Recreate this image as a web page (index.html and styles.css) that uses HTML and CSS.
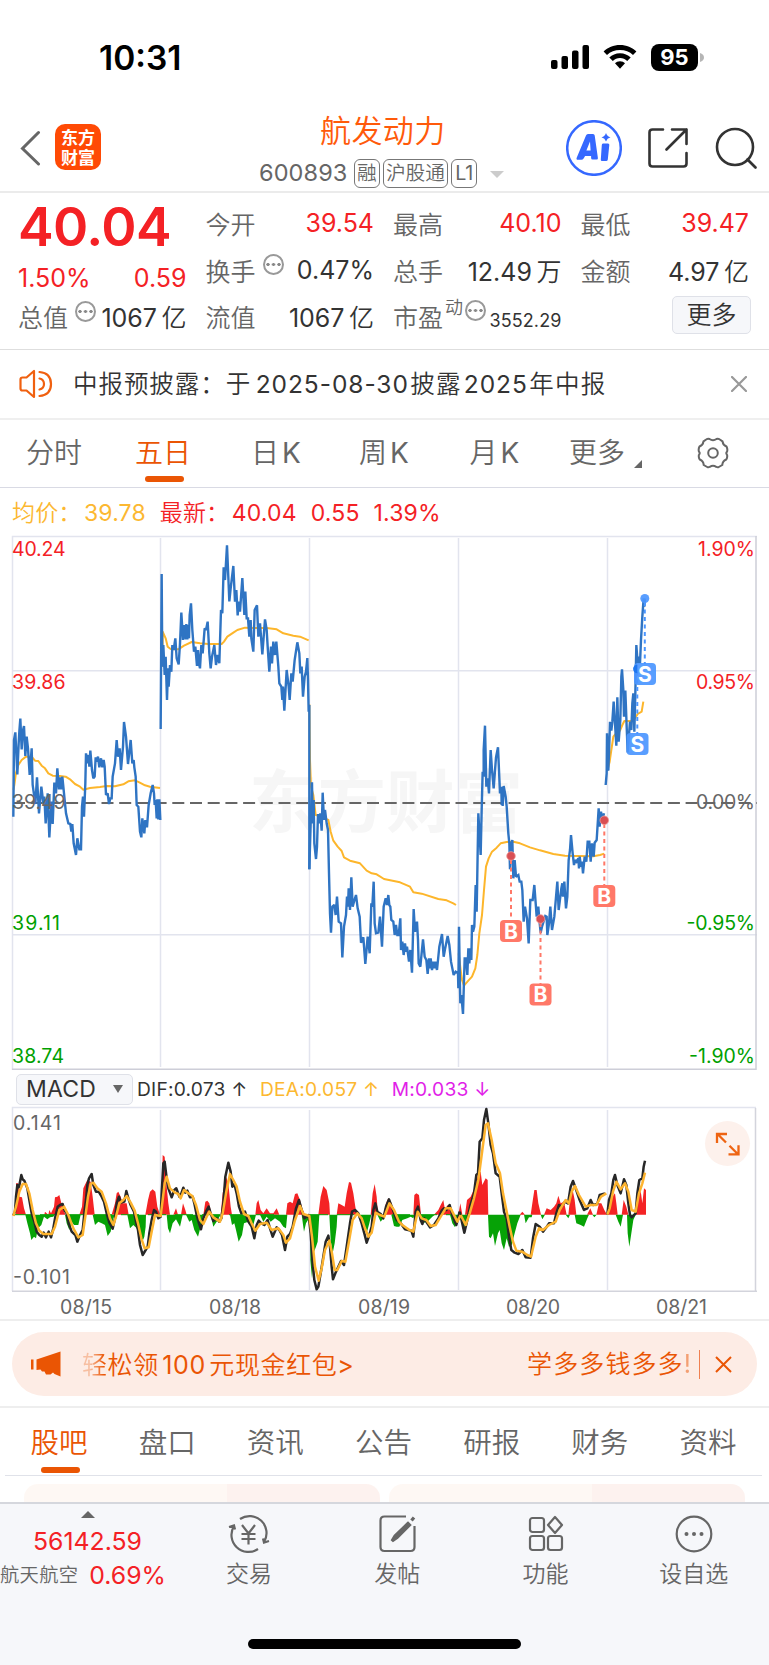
FILE: index.html
```html
<!DOCTYPE html>
<html lang="zh-CN">
<head>
<meta charset="utf-8">
<title>航发动力 600893</title>
<link rel="stylesheet" href="styles.css">
</head>
<body>
<div class="app">
  <header class="status">
    <span class="clock">10:31</span>
    <span class="status-icons">
      <svg width="39" height="26" viewBox="0 0 39 26"><rect x="0" y="16" width="6.500" height="9" rx="2"/><rect x="10.500" y="12" width="6.500" height="13" rx="2"/><rect x="21" y="6.500" width="6.500" height="18.500" rx="2"/><rect x="31.500" y="1" width="6.500" height="24" rx="2"/></svg>
      <svg class="wifi" width="34" height="26" viewBox="0 0 34 26"><path d="M17 1C10.500 1 4.800 3.500 .6 7.500L4 11C7.300 7.800 12 6 17 6s9.700 1.800 13 5l3.400-3.500C29.200 3.500 23.500 1 17 1z"/><path d="M17 9.300c-4.200 0-8 1.600-10.700 4.200l3.500 3.400c1.900-1.700 4.400-2.800 7.200-2.800s5.300 1.100 7.200 2.800l3.500-3.400C25 10.900 21.200 9.300 17 9.300z"/><path d="M17 17.300c-2 0-3.800.8-5 2l5 5.400 5-5.400c-1.200-1.200-3-2-5-2z"/></svg>
      <span class="battery">95</span>
      <svg class="nub" width="5" height="26" viewBox="0 0 5 26"><path d="M1 9c2.500 1 4 2 4 4.500S3.500 17 1 18z"/></svg>
    </span>
  </header>

  <nav class="titlebar">
    <svg class="back" width="22" height="36" viewBox="0 0 22 36"><path d="M19.500 2.500 3.500 18.500l16 15.500"/></svg>
    <div class="logo">东方<br>财富</div>
    <div class="heading">
      <h1>航发动力</h1>
      <div class="sub"><span class="code">600893</span><span class="tag">融</span><span class="tag">沪股通</span><span class="tag">L1</span><i class="caret"></i></div>
    </div>
    <div class="tools">
      <svg width="56" height="56" viewBox="0 0 56 56"><circle cx="28" cy="28" r="26.800" fill="#fff" stroke="#3568ff" stroke-width="2.500"/><g fill="#3568ff" fill-rule="evenodd"><path d="M20 15.500q.5-1.500 2-1.500h5q1.500 0 1.700 1.500l3.200 22.500q.2 1.500-1.300 1.500h-4q-1.500 0-1.500-1.500v-2h-6l-1.500 2.500q-.8 1.200-2.200 1.200h-3.500q-2 0-1.200-2zM24 21.500l-3.600 9h4.200z"/><path d="M37 23.500h5q1.500 0 1.300 1.500l-1.500 14.500q-.2 1.500-1.700 1.500h-4q-1.500 0-1.300-1.500l1-14.500q0-1.500 1.200-1.500zM40 13q1 3.500 4.500 4.300-3.500.9-4.500 4.200-1-3.300-4.500-4.200 3.500-.8 4.500-4.300z"/></g></svg>
      <svg class="line share" width="40" height="40" viewBox="0 0 40 40"><path d="M15 1.500H4.500Q1.500 1.500 1.500 4.500v31q0 3 3 3h31q3 0 3-3V25M24 1.500h14.500V16M38.500 1.500 18.500 21.500"/></svg>
      <svg class="line" width="42" height="42" viewBox="0 0 42 42"><circle cx="20" cy="20" r="18"/><path d="m32.500 32.500 8 8"/></svg>
    </div>
  </nav>

  <section class="quote">
    <div class="col c1">
      <div class="price">40.04</div>
      <div class="cell red"><span>1.50%</span><b>0.59</b></div>
      <div class="cell"><span>总值</span><i class="dots"></i><b>1067<em>亿</em></b></div>
    </div>
    <div class="col">
      <div class="cell"><span>今开</span><b class="red">39.54</b></div>
      <div class="cell"><span>换手</span><i class="dots"></i><b>0.47%</b></div>
      <div class="cell"><span>流值</span><b>1067<em>亿</em></b></div>
    </div>
    <div class="col">
      <div class="cell"><span>最高</span><b class="red">40.10</b></div>
      <div class="cell"><span>总手</span><b>12.49<em>万</em></b></div>
      <div class="cell pe"><span>市盈</span><sup>动</sup><i class="dots"></i><b>3552.29</b></div>
    </div>
    <div class="col">
      <div class="cell"><span>最低</span><b class="red">39.47</b></div>
      <div class="cell"><span>金额</span><b>4.97<em>亿</em></b></div>
      <div class="cell more"><button>更多</button></div>
    </div>
  </section>

  <section class="notice">
    <svg width="34" height="30" viewBox="0 0 34 30"><path d="M1.500 10.500q0-2 2-2h4L15 2v26l-7.500-6.500h-4q-2 0-2-2zM20.500 9.500q4.500 1 4.500 5.500t-4.500 5.500M20.500 3q11.500 1 11.500 12T20.500 27"/></svg>
    <p>中报预披露：<span class="gap">于</span>2025-08-30<em>披露</em>2025<em>年中报</em></p>
    <svg class="close" width="16" height="16" viewBox="0 0 16 16"><path d="m1 1 14 14M15 1 1 15"/></svg>
  </section>

  <nav class="periods">
    <span>分时</span><span class="on">五日</span><span>日<em>K</em></span><span>周<em>K</em></span><span>月<em>K</em></span><span class="drop">更多</span>
    <svg width="32" height="32" viewBox="0 0 32 32"><path d="M12.500 2q3.500 2.500 7 0 1.500-.8 3 .3l3 2q.5 3.800 4 5.200 1.300 2.500.6 5-1.600 1.500 0 3.500.5 2.500-.8 4.500-3.800 1.500-4 5.500l-3.500 2q-1.200.8-2.600-.2-3.200-2-6.400 0-1.400 1-2.600.2l-3.500-2q-.2-4-4-5.500Q1.400 20.500 1.900 18q1.600-2 0-3.500-.7-2.500.6-5 3.500-1.400 4-5.200l3-2q1.500-1.100 3-.3z"/><circle cx="16" cy="16" r="4.800"/></svg>
  </nav>

  <div class="legend"><span class="avg">均价：<b>39.78</b></span><span class="red">最新：<b>40.04</b><b>0.55</b><b>1.39%</b></span></div>

  <svg class="chart" width="769" height="544" viewBox="0 528 769 544">
    <g fill="none" stroke="#e2e4ee" stroke-width="1.500"><path d="M12.500 1070V536.500H757"/><path d="M160.500 538v529M309.500 538v529M458.500 538v529M607.500 538v529M13 670.700H757M13 934.700H757"/><path stroke="#cdced8" d="M756 536V1069.300H12"/></g>
    <text class="water" x="249" y="827" textLength="274" lengthAdjust="spacingAndGlyphs">东方财富</text>
    <path d="M13 803H757" stroke="#666" stroke-width="2" stroke-dasharray="12 5.700" fill="none"/>
    <g class="avgline">
      <g transform="translate(0 530) scale(.333333)">
        <path d="M40 780 43 765 48 728 55 705 65 690 78 680 95 680 105 692 115 693 125 707 135 715 145 730 158 737 180 738 197 740 210 748 225 762 240 770 250 779 270 774 300 771 320 768 345 769 370 763 385 754 405 751 418 757 435 766 450 770 480 774"/>
        <path d="M487 410 488 305 497 325 503 350 512 357 535 358 552 347 575 336 600 340 625 342 665 342 672 335 682 320 700 308 712 300 735 293 765 294 800 294 830 298 850 310 880 317 900 320 926 331"/>
      </g>
      <g transform="translate(300 660) scale(.333333)">
        <path d="M28 133 30 300 33 380 40 405 47 465 60 468 75 475 85 480 92 515 100 542 113 560 125 573 132 592 150 602 180 610 200 632 215 640 230 643 252 657 300 667 330 680 340 697 365 701 415 717 440 721 460 730 468 735"/>
        <path d="M476 880 482 930 486 960 492 977 505 962 516 950 526 925 532 885 538 820 546 765 552 690 558 620 566 595 576 575 590 563 602 550 620 546 640 545 660 550 690 562 720 571 760 582 795 587 830 588 880 589 900 585 913 581"/>
      </g>
      <path transform="translate(450 560) scale(.333333)" d="M472 632 479 605 484 570 490 530 500 518 510 512 517 495 523 483 545 483 555 475 563 462 575 455 580 425"/>
    </g>
    <g class="priceline">
      <g transform="translate(0 530) scale(.333333)">
        <path d="M40 860 42 630 46 607 52 733 56 640 58 605 61 566 65 658 68 605 72 588 76 678 80 620 84 655 89 735 95 655 98 765 106 822 111 742 117 850 124 770 130 820 133 800 137 880 143 790 148 922 154 815 158 882 163 758 168 790 172 715 177 778 181 742 184 778 187 740 190 770 195 820 198 850 205 880 211 882 214 905 217 882 221 940 228 975 232 925 238 958 243 958 246 830 249 800 252 860 256 760 258 670 262 700 266 675 268 710 271 662 276 720 280 745 284 740 287 682 290 695 294 680 298 712 303 685 307 712 311 690 314 710 318 795 323 790 327 822 331 805 335 805 338 740 345 700 350 630 354 680 359 655 363 720 369 650 372 576 378 620 384 702 392 630 397 700 401 690 403 712 407 740 410 825 415 830 420 905 424 922 427 865 433 910 436 870 441 892 446 825 452 790 458 765 462 790 464 825 467 810 470 865 472 808 475 868 478 808 481 870"/>
        <path d="M482 597 485 132 487 410 490 345 494 435 497 380 501 510 504 415 506 470 510 405 514 425 517 345 521 360 526 325 530 385 536 403 540 340 544 248 549 330 553 285 557 328 559 282 562 328 565 285 567 325 569 255 573 220 577 300 582 365 586 350 591 408 594 360 597 400 600 415 604 345 608 370 614 295 618 300 623 275 628 370 632 415 636 380 643 345 648 405 653 375 658 400 663 240 667 250 671 112 675 150 681 46 688 214 692 175 700 108 705 215 709 180 713 256 716 215 720 245 727 144 733 255 736 185 740 265 744 265 748 320 752 270 754 325 760 365 764 240 771 226 775 320 780 280 787 373 795 268 800 300 803 350 808 425 813 350 816 400 820 335 825 375 829 335 835 410 838 460 844 470 847 510 849 470 853 542 860 420 866 470 869 510 874 430 878 455 884 390 892 337 898 370 901 430 905 410 909 500 914 440 918 425 922 384 924 450 926 545 928 525 928 1018"/>
      </g>
      <g transform="translate(300 660) scale(.333333)">
        <path d="M28 628 32 490 36 367 38 490 41 420 43 550 48 597 51 560 54 462 57 490 61 460 65 512 68 398 72 480 75 450 80 490 84 510 87 640 90 760 93 818 97 740 103 735 107 765 111 710 116 785 123 790 127 892 132 800 138 765 141 710 144 740 146 685 150 750 154 652 158 740 162 725 168 705 173 745 179 770 183 848 190 832 196 912 203 830 209 880 214 730 217 740 221 665 224 790 228 820 235 818 240 770 246 860 251 740 257 715 261 735 265 705 268 735 271 740 274 780 280 785 284 825 288 795 292 825 296 825 301 775 303 870 307 845 311 885 315 850 318 875 321 860 327 905 331 870 336 938 341 747 345 815 351 785 354 840 356 910 361 920 369 838 374 890 379 900 383 942 387 895 389 925 392 895 396 930 400 905 403 925 406 905 411 930 418 860 426 822 431 890 435 868 443 828 448 855 453 905 461 945 467 935 474 940 475 985 477 800 480 985 481 1030 484 1005 489 1062 492 960 494 895 498 895 502 945 505 865 508 910 511 865 514 900 516 795 519 815 523 800 527 675 530 755 535 460 539 530 542 585 545 450 548 335 551 350 551 270 555 197 559 380 563 355 567 400 572 270 576 330 581 385 588 292 594 262 600 400 604 380 605 435 607 405 608 438 611 378 617 410 620 440 625 520 628 550 630 628 634 550 637 540 640 655 644 600 648 650 655 645 659 665 664 665 667 690 671 785 675 740 681 775 686 850 691 720 698 720 703 675 710 770 715 740 718 780 722 818 726 800 736 768 740 770 742 825 747 790 751 740 756 810 763 770 772 665 776 750 784 685 787 670 789 710 793 665 798 745 802 710 806 600 810 570 813 525 818 580 822 615 826 600 830 605 835 595 837 625 839 590 843 620 846 605 849 640 854 590 859 605 863 545 868 545 872 605 876 550 881 590 884 548 890 540 896 445 899 500 903 455 907 480 912 460"/>
      </g>
      <path transform="translate(450 560) scale(.333333)" d="M467 675 470 640 471 520 475 632 478 550 480 485 484 512 487 485 491 425 495 490 499 557 502 412 506 545 511 480 514 350 516 328 520 390 522 470 526 392 530 500 533 577 540 485 544 510 547 430 550 400 553 515 556 400 559 255 563 310 567 290 570 310 573 240 577 170 581 115 583 140 585 115"/>
    </g>
    <g class="marks">
      <path class="buy" d="M511 860v60M540.500 923v61M604.300 824v61"/>
      <path class="sell" d="M644.800 602v62M637.300 672v62"/>
      <g fill="#d94f54" stroke="#f29a96" stroke-width=".8"><circle cx="511" cy="856" r="4.300"/><circle cx="540.500" cy="919" r="4.300"/><circle cx="604.300" cy="820.300" r="4.300"/></g>
      <g fill="#ff7868"><rect x="500" y="920" width="22" height="22" rx="4"/><rect x="529.500" y="983.500" width="22" height="22" rx="4"/><rect x="593.300" y="885" width="22" height="22" rx="4"/></g>
      <g fill="#4b96ff" fill-opacity=".92"><circle cx="644.800" cy="598.500" r="4.500"/><rect x="634" y="663" width="22" height="22" rx="4"/><rect x="626.500" y="733" width="22" height="22" rx="4"/></g>
      <path d="M637.300 664.800a4.200 4.200 0 0 0 0 8.400z" fill="#1f78ef"/>
      <g class="letter"><text x="511" y="938.500">B</text><text x="540.500" y="1002">B</text><text x="604.300" y="903.500">B</text><text x="645" y="681.500">S</text><text x="637.500" y="751.500">S</text></g>
    </g>
    <g class="axis">
      <text class="up" x="12" y="556" textLength="53.500">40.24</text><text class="up" x="12" y="689" textLength="53.500">39.86</text><text x="12" y="809" textLength="53.500">39.49</text><text class="down" x="12" y="929.500" textLength="48">39.11</text><text class="down" x="12" y="1062.500" textLength="52">38.74</text>
      <g text-anchor="end"><text class="up" x="755" y="556" textLength="57">1.90%</text><text class="up" x="755" y="689" textLength="59">0.95%</text><text x="755" y="809" textLength="59">0.00%</text><text class="down" x="755" y="929.500" textLength="68.500">-0.95%</text><text class="down" x="755" y="1062.500" textLength="66">-1.90%</text></g>
    </g>
  </svg>

  <div class="macd-head">
    <button>MACD<i></i></button><span class="dif">DIF:0.073 ↑</span><span class="dea">DEA:0.057 ↑</span><span class="m">M:0.033 ↓</span>
  </div>

  <svg class="macd" width="769" height="214" viewBox="0 1106 769 214">
    <g fill="none" stroke="#e2e4ee" stroke-width="1.500"><path d="M12.500 1291V1107.500H756"/><path d="M160.500 1110v180M309.500 1110v180M458.500 1110v180M607.500 1110v180"/><path stroke="#d3d4dc" d="M755.500 1108V1291.300M757 1291.300H12"/></g>
    <g transform="translate(0 1060) scale(.333333)">
      <path fill="#f42325" d="M48 464V370L55 370 58 410 66 412 72 445 78 464zM133 464 135 455 145 464 148 450 153 460 162 440 165 412 172 410 178 405 183 425 190 450 197 464zM238 464 246 440 250 385 256 372 262 360 272 365 278 410 284 464zM335 464 345 430 350 400 355 395 362 410 368 430 380 430 386 464zM436 464 444 420 450 395 458 388 466 395 472 440 480 464zM484 464 488 285 494 290 500 380 505 430 510 464zM520 464 528 445 534 464zM543 464 549 430 556 450 560 464zM610 464 616 425 622 422 628 430 634 464zM662 464 668 400 678 350 685 370 692 440 696 464zM766 464 770 430 775 420 782 450 790 460 800 445 810 460 820 460 830 445 838 464zM858 464 862 430 870 425 878 430 885 402 892 400 900 420 908 450 916 464zM955 464 962 410 970 378 980 390 988 430 990 464zM1010 464 1015 430 1025 435 1034 440 1040 400 1047 366 1053 368 1060 400 1066 440 1070 464zM1112 464 1118 400 1124 372 1130 410 1134 464zM1150 464 1158 430 1165 415 1173 425 1182 464z"/>
      <path fill="#06a206" d="M76 464 82 490 90 520 94 540 102 530 108 535 114 505 124 495 132 470 142 478 150 472 160 470 164 464zM195 464 200 490 208 510 215 485 222 495 235 495 242 464zM278 464 285 495 295 485 305 490 315 495 323 528 332 515 340 475 346 464zM382 464 390 505 400 495 410 505 420 530 427 545 433 530 437 500 438 464zM500 464 504 505 510 520 518 490 528 478 540 500 548 464zM558 464 568 485 575 480 583 510 594 530 602 500 610 464zM632 464 640 500 650 485 662 464zM690 464 696 495 703 490 708 510 716 545 726 525 732 490 745 485 760 495 768 464zM780 464 790 485 800 470 812 485 825 475 840 485 850 500 858 505 862 464zM905 464 912 515 918 490 930 470 931 600 936 655 942 575 948 560 953 545 958 464zM988 464 992 540 998 580 1004 550 1010 500 1012 464zM1074 464 1082 485 1092 500 1100 520 1108 490 1114 464zM1132 464 1142 485 1150 475 1155 464zM1174 464 1182 498 1190 500 1198 500 1207 480 1222 475 1232 470 1240 475 1244 464z"/>
    </g>
    <g transform="translate(369 1060) scale(.333333)">
      <path fill="#f42325" d="M133 464 136 405 142 400 150 405 156 464zM195 464 208 450 215 435 223 420 228 450 235 435 245 455 250 464zM268 464 274 430 280 464zM288 464 294 420 305 410 318 380 328 340 335 335 340 375 350 355 356 360 358 464zM452 464 460 455 468 464zM485 464 490 430 496 390 503 390 508 430 516 464zM525 464 533 445 545 450 555 440 562 430 568 407 575 430 585 425 593 464zM598 464 604 410 611 390 617 420 622 464zM654 464 664 445 672 464zM682 464 690 430 697 430 706 450 714 464zM716 464 720 410 730 410 738 400 742 430 746 464zM758 464 764 420 772 440 778 464zM798 464 803 410 810 380 816 400 820 430 825 385 831 390 831 464z"/>
      <path fill="#06a206" d="M150 464 160 490 175 485 190 470 198 464zM243 464 250 490 258 502 265 485 275 475 282 500 290 500 296 464zM357 464 360 530 365 535 372 520 378 558 387 520 392 510 398 550 405 570 413 535 420 560 428 555 437 520 445 490 455 464zM465 464 470 490 480 472 488 472 490 464zM515 464 520 478 528 464zM590 464 598 475 603 464zM617 464 622 490 635 495 645 500 655 475 660 464zM670 464 676 472 683 464zM740 464 748 485 755 500 762 464zM774 464 776 520 781 560 787 520 793 480 800 464z"/>
    </g>
    <path d="M13 1214.700H277M310 1214.700h44M392 1214.700h60" stroke="#06a206" stroke-width="1" stroke-dasharray="18 9"/>
    <g class="difline">
      <path transform="translate(0 1060) scale(.333333)" d="M40 466 45 455 48 410 52 375 57 382 64 345 68 358 73 362 82 385 88 420 95 460 103 485 110 515 118 525 125 530 131 518 138 532 146 515 153 532 160 505 166 470 173 440 180 435 188 432 193 450 200 460 206 490 215 515 226 525 232 545 240 525 248 510 254 450 258 420 262 375 267 355 275 342 280 375 288 395 296 395 305 410 312 425 320 460 328 488 338 506 345 475 350 430 357 410 363 428 373 425 379 393 385 415 392 435 402 455 408 485 414 510 420 555 428 585 437 570 443 560 448 520 455 480 462 450 468 455 475 475 482 470 485 400 490 310 494 305 500 355 505 385 515 412 523 390 529 385 538 410 544 400 550 383 556 398 562 392 570 412 578 410 583 430 590 465 597 490 603 508 610 475 618 455 626 440 632 460 640 483 650 475 658 485 664 475 670 430 676 350 685 308 692 335 697 380 703 372 710 400 717 440 724 460 735 455 745 485 755 500 763 535 770 495 776 482 784 490 793 495 803 480 810 505 818 530 830 502 838 510 846 525 855 570 862 530 870 522 878 500 888 445 897 420 905 450 913 475 920 470 926 465 932 520 938 610 943 660 950 688 955 680 962 640 970 590 977 545 985 527 990 560 995 620 999 658 1006 640 1015 620 1023 603 1032 615 1040 560 1050 490 1056 455 1065 450 1075 460 1085 490 1093 520 1100 548 1108 525 1115 500 1120 450 1126 430 1132 455 1142 462 1150 475 1158 440 1167 418 1179 450 1190 480 1202 490 1215 508 1225 510 1234 512 1240 530 1247 455 1254 440 1262 480 1267 492 1273 475 1282 490 1290 502 1302 495 1315 475 1325 452 1332 445 1339 450 1349 435 1357 465 1369 495 1379 455"/>
      <path transform="translate(369 1060) scale(.333333)" d="M272 455 286 518 295 480 303 440 315 400 322 345 327 340 332 245 340 235 345 180 352 147 358 190 365 255 372 280 380 340 392 350 398 400 405 455 413 475 420 530 427 570 437 578 448 582 460 570 470 592 485 593 492 535 500 492 512 500 522 515 530 505 540 490 555 490 562 460 570 435 578 440 588 425 597 430 605 380 612 363 620 385 632 420 645 450 655 445 665 420 672 435 685 432 692 405 708 400M715 464 720 420 727 400 733 360 738 345 745 375 755 400 765 358 772 375 778 430 783 465 788 472 800 460 805 400 811 360 820 355 824 320 828 302"/>
    </g>
    <g class="deal">
      <path transform="translate(0 1060) scale(.333333)" d="M40 468 48 440 58 395 68 372 78 372 88 400 98 450 108 490 118 512 130 522 155 522 165 500 178 450 192 440 205 465 220 505 235 532 248 525 256 470 264 410 272 372 280 368 292 385 305 395 318 430 330 475 340 495 348 470 358 430 370 420 380 408 392 428 404 452 414 490 424 535 434 565 446 562 456 510 465 465 482 468 488 420 494 370 500 350 510 385 525 398 535 402 542 415 552 390 565 400 577 408 588 435 600 480 610 492 620 470 628 455 640 472 660 485 668 460 678 400 690 342 700 360 710 380 720 425 732 462 745 468 755 490 766 512 780 492 800 488 815 510 835 505 850 525 858 548 870 535 885 480 900 438 910 462 928 468 936 530 945 620 956 662 965 625 975 570 988 542 996 580 1004 630 1012 630 1025 603 1036 605 1046 550 1058 480 1072 460 1085 475 1095 505 1105 530 1115 518 1127 458 1140 465 1153 470 1168 430 1182 450 1197 485 1207 495 1225 508 1240 515 1253 455 1265 475 1279 480 1292 498 1307 495 1322 470 1337 445 1352 445 1372 485 1382 465"/>
      <path transform="translate(369 1060) scale(.333333)" d="M275 465 290 495 302 460 315 415 328 360 340 270 350 195 357 190 368 240 380 310 393 340 402 400 412 450 422 500 432 545 442 572 460 575 475 585 486 590 500 530 510 505 522 510 540 495 560 485 572 450 590 420 600 430 608 395 618 378 630 405 650 440 665 435 682 435 696 410 712 400M715 464 722 445 732 395 742 365 755 388 768 370 778 395 788 450 800 455 810 400 820 370 828 338"/>
    </g>
    <g class="axis"><text x="13" y="1129.500" textLength="48">0.141</text><text x="13" y="1284" textLength="57">-0.101</text>
      <text x="60" y="1313.500" textLength="52">08/15</text><text x="209" y="1313.500" textLength="52">08/18</text><text x="358" y="1313.500" textLength="52">08/19</text><text x="506" y="1313.500" textLength="54">08/20</text><text x="656" y="1313.500" textLength="51">08/21</text></g>
    <circle cx="727.500" cy="1143.500" r="22.500" fill="#fdf1ec"/>
    <path d="M727 1134h-10v9M718 1134.500l8 8M728.500 1154.300h10v-9M737.500 1153.800l-8-8" fill="none" stroke="#ee6412" stroke-width="2.300"/>
  </svg>

  <section class="promo-wrap">
    <div class="promo">
      <svg width="30" height="26" viewBox="0 0 30 26"><path d="M0 8.500h2.500v10H0zM5.500 8.500 29.500.5v25l-6-2.500-1.500-1.500-2.500 2h-4.500l-1.500-3H11l-1.500-2-4 .5z"/></svg>
      <span class="promo-l"><i>轻</i>松领<em>100</em>元现金红包&gt;</span>
      <span class="promo-r">学多多钱多多<i>!</i></span>
      <svg class="x" width="17" height="17" viewBox="0 0 17 17"><path d="m1 1 15 15M16 1 1 16"/></svg>
    </div>
  </section>

  <nav class="sections"><span class="on">股吧</span><span>盘口</span><span>资讯</span><span>公告</span><span>研报</span><span>财务</span><span>资料</span></nav>
  <div class="cards"><div></div><div></div></div>

  <footer class="dock">
    <div class="index"><i></i><b>56142.59</b><span>航天航空<b>0.69%</b></span></div>
    <div class="item"><svg width="44" height="40" viewBox="0 0 44 40"><path d="M13 5A17 17 0 0 1 37 28M31 35A17 17 0 0 1 7 12M2 13l5-1.500 1 4M42 27l-5 1.500-1-4M15 11l6.500 8.500L28 11M21.500 19.500v11M14.500 20h14M14.500 25h14"/></svg>交易</div>
    <div class="item"><svg width="44" height="40" viewBox="0 0 44 40"><path d="M31 2.500H9.500q-4 0-4 4V33q0 4 4 4h26q4 0 4-4V12"/><path d="M36.500 6.500 39 3.500M33 9.500 20 22l-3 5 5-3.500L34.500 11z" stroke-width="3.200"/></svg>发帖</div>
    <div class="item"><svg width="44" height="40" viewBox="0 0 44 40"><rect x="7" y="4" width="14" height="14" rx="2.500"/><rect x="7" y="22" width="14" height="14" rx="2.500"/><rect x="25" y="22" width="14" height="14" rx="2.500"/><path d="m32 3 7 8-7 8-7-8z" stroke-linejoin="round"/></svg>功能</div>
    <div class="item"><svg width="44" height="40" viewBox="0 0 44 40"><circle cx="22" cy="20" r="17.300"/><g class="dot"><circle cx="14.500" cy="20" r="2"/><circle cx="22" cy="20" r="2"/><circle cx="29.500" cy="20" r="2"/></g></svg>设自选</div>
    <div class="home"></div>
  </footer>
</div>
</body>
</html>
```
FILE: styles.css
```css
* { box-sizing: border-box; }
body { margin: 0; background: #fff; }
.app { width: 769px; height: 1665px; overflow: hidden; font-family: Inter, "Noto Sans CJK SC DemiLight", "Noto Sans CJK SC", sans-serif; font-weight: 370; color: #333; display: flex; flex-direction: column; }
.app > * { flex: none; }
svg { display: block; flex: none; }
i, em { font-style: normal; }
b { font-weight: inherit; }
h1, p { margin: 0; font-weight: inherit; }
.red { color: #f42125; }
button { font: inherit; color: #333; background: #f6f7fa; border: 1.5px solid #dfe1e8; border-radius: 5px; padding: 0; white-space: nowrap; }

.status { height: 105px; padding: 0 66px 0 99px; display: flex; justify-content: space-between; }
.clock { font-size: 33.500px; font-weight: 600; color: #000; line-height: 40px; margin-top: 38px; letter-spacing: 0; }
.status-icons { display: flex; height: 26px; margin-top: 44px; }
.wifi { margin-left: 13px; }
.battery { margin-left: 14px; width: 47px; height: 27px; border-radius: 8px; background: #000; color: #fff; font-weight: 700; font-size: 22px; line-height: 27px; text-align: center; }
.nub { margin-left: 1px; fill: #b5b5b5; margin-right: -1px; }

.titlebar { height: 88px; border-bottom: 2px solid #ebebeb; display: flex; }
.back { margin: 25px 0 0 19px; fill: none; stroke: #666; stroke-width: 3; stroke-linecap: round; }
.logo { margin: 19px 0 0 14px; width: 46px; height: 46px; border-radius: 10px; background: #ff4a05; color: #fff; font-family: "Noto Sans CJK SC", sans-serif; font-weight: 700; font-size: 17px; line-height: 20px; padding-top: 3px; text-align: center; }
.heading { width: 244px; margin-left: 158px; }
.heading h1 { color: #ff5a0a; font-size: 31px; line-height: 36px; margin: 8px 0 0 61px; letter-spacing: .4px; white-space: nowrap; }
.sub { display: flex; align-items: center; margin-top: 9px; height: 32px; color: #666; }
.code { font-size: 23.5px; letter-spacing: .1px; width: 95px; flex: none; margin-top: -3px; }
.tag { border: 1.5px solid #777; border-radius: 6px; font-size: 19.700px; line-height: 26px; height: 29px; padding: 0 2px; margin-right: 3.200px; margin-top: -2px; white-space: nowrap; flex: none; }
.tag:nth-child(4) { padding: 0 3px; }
.caret { border: 7px solid transparent; border-top-color: #ccc; border-bottom: 0; margin-left: 9px; flex: none; }
.tools { margin-left: 63px; display: flex; align-items: center; height: 85px; }
.tools .line { fill: none; stroke: #333; stroke-width: 2.6; stroke-linecap: round; stroke-linejoin: round; }
.share { margin: 0 27px 0 26px; }

.quote { height: 157px; border-bottom: 1.5px solid #dedede; padding: 7px 18px 0; display: flex; gap: 19px; }
.col { width: 168.500px; flex: none; font-size: 25px; }
.c1 .price { font-size: 53.500px; font-weight: 600; color: #f42125; line-height: 54px; height: 54px; letter-spacing: -.6px; }
.cell { height: 46.400px; display: flex; align-items: center; white-space: nowrap; }
.cell b { margin-left: auto; font-size: 25px; }
.cell em { margin-left: 4.500px; }
.cell span { color: #666; }
.cell.red span { color: inherit; }
.c1 .cell:nth-child(2) { height: 40px; padding-top: 8px; }
.c1 .cell:nth-child(3) { height: 44px; }
.dots { width: 21px; height: 21px; border: 2px solid #999; border-radius: 50%; margin-left: 7px; margin-top: -10px; flex: none; background: radial-gradient(circle, #888 1.4px, transparent 1.8px) center / 5.500px 17px; }
.pe sup { font-size: 18px; line-height: 20px; color: #666; margin: -15px 0 0 2px; }
.pe .dots { margin-left: 2px; }
.pe b { font-size: 18px; margin-top: 10px; letter-spacing: .1px; }
.more { justify-content: flex-end; }
.more button { width: 79px; height: 38px; font-size: 25px; line-height: 34px; margin-right: -2px; margin-top: -2px; }

.notice { height: 70px; border-bottom: 2px solid #efefef; display: flex; align-items: center; padding: 0 22px 0 19px; }
.notice svg { fill: none; stroke: #f0600f; stroke-width: 2.200; stroke-linejoin: round; stroke-linecap: round; }
.notice p { font-size: 24.500px; margin: -3px 0 0 20px; letter-spacing: .95px; white-space: nowrap; }
.notice em { margin: 0 2px 0 1.500px; letter-spacing: 1.200px; }
.notice .gap { margin-right: 4.500px; }
.notice .close { margin-left: auto; stroke: #999; }

.periods { height: 68px; border-bottom: 1.5px solid #d9dae4; display: grid; grid-template-columns: 108px 110px 116px 100px 121px 84px 130px; font-size: 28px; color: #666; text-align: center; line-height: 67px; }
.periods span, .sections span { position: relative; white-space: nowrap; }
.periods em { margin-left: 3px; }
.periods .on, .sections .on { color: #ea5504; }
.on::after { content: ""; position: absolute; left: 50%; bottom: 5px; width: 39px; height: 6px; margin-left: -18px; border-radius: 3px; background: #ea5504; }
.drop::after { content: ""; position: absolute; right: -3px; top: 40px; border: 4.500px solid transparent; border-right-color: #666; border-bottom-color: #666; }
.periods svg { margin: 17px auto 0 58px; fill: none; stroke: #666; stroke-width: 2; }

.legend { height: 40px; padding: 5px 0 0 12px; display: flex; align-items: center; font-size: 23px; letter-spacing: .15px; white-space: nowrap; }
.legend b { margin-right: 14px; }
.legend b:first-child { margin-left: 2.500px; }
.avg { color: #fcb831; }

.water { font: 700 68px "Noto Sans CJK SC", sans-serif; fill: #f6f6f6; }
.axis { font-family: Inter, sans-serif; font-size: 19.500px; fill: #666; }
.axis .up { fill: #f42125; }
.axis .down { fill: #00a000; }
.avgline, .priceline, .difline, .deal { fill: none; stroke-linejoin: round; }
.avgline { stroke: #fdb62b; stroke-width: 6; }
.priceline { stroke: #2f74c3; stroke-width: 7.200; stroke-linejoin: miter; stroke-miterlimit: 2; }
.difline { stroke: #272727; stroke-width: 7.500; }
.deal { stroke: #fdb32e; stroke-width: 7.500; }
.marks { stroke-width: 2; fill: none; }
.buy { stroke: #ff7868; stroke-dasharray: 4 3.500; }
.sell { stroke: #4b96ff; stroke-dasharray: 4 3.500; }
.letter { font: 700 21px Inter, sans-serif; fill: #fff; text-anchor: middle; stroke: none; }

.macd-head { height: 34px; display: flex; align-items: center; padding-left: 16px; font-size: 19.200px; letter-spacing: .22px; white-space: nowrap; }
.macd-head button { width: 117px; height: 31px; font-size: 23px; line-height: 28px; text-align: left; padding-left: 9px; margin-right: 4px; letter-spacing: .2px; }
.macd-head i { display: inline-block; border: 5px solid transparent; border-top: 8px solid #666; border-bottom: 0; margin: 0 0 4px 17px; }
.dea { color: #fcb831; margin-left: 12.500px; }
.m { color: #e11fe8; margin-left: 12.500px; }

.promo-wrap { height: 89px; border-top: 2px solid #eee; border-bottom: 2px solid #eee; padding: 11px 12px; margin-top: -1px; }
.promo { height: 64px; border-radius: 32px; background: #fdece5; color: #ea5504; display: flex; align-items: center; font-size: 25px; padding: 0 25px 0 19px; white-space: nowrap; }
.promo svg { fill: #ea5504; }
.promo-l { margin: -2px 0 0 21px; letter-spacing: .6px; }
.promo-l em { margin: 0 3.500px; }
.promo-l i { -webkit-mask-image: linear-gradient(90deg, rgba(0,0,0,.3) 30%, #000 85%); mask-image: linear-gradient(90deg, rgba(0,0,0,.3) 30%, #000 85%); }
.promo-r i { opacity: .5; }
.promo-r { margin-left: auto; padding-right: 7px; border-right: 1.5px solid #f08050; line-height: 28px; height: 29px; letter-spacing: 1.100px; }
.promo .x { fill: none; stroke: #ea5504; stroke-width: 2; margin-left: 15px; }

.sections { height: 68px; margin: 0 7px 0 5px; border-bottom: 1.5px solid #e0e2e9; display: grid; grid-template-columns: repeat(7, 1fr); text-align: center; color: #666; font-size: 28.500px; line-height: 69px; }
.sections .on::after { bottom: 4px; }
.cards { height: 26px; padding: 8px 24px 0; display: flex; gap: 9px; overflow: hidden; }
.cards div { flex: 1; height: 50px; border-radius: 14px; background: linear-gradient(90deg, #fef8f4 57%, #fdf2ef 57%); }

.dock { height: 163px; background: #f6f7fa; border-top: 2px solid #d5d7dd; display: grid; grid-template-columns: 175px repeat(4, 148.200px); grid-template-rows: 100px; position: relative; color: #666; }
.index { display: flex; flex-direction: column; align-items: center; }
.index i { border: 7px solid transparent; border-bottom-color: #666; border-top: 0; margin-top: 7px; }
.index b { font-size: 24.800px; color: #f42125; line-height: 34px; }
.index > b { margin-top: 6px; }
.index span { font-size: 19.300px; line-height: 34px; align-self: flex-start; display: flex; align-items: center; white-space: nowrap; letter-spacing: .3px; }
.index span b { margin-left: 11px; letter-spacing: 0; }
.item { display: flex; flex-direction: column; align-items: center; font-size: 23px; line-height: 34px; }
.item svg { margin: 10px 0 3px; fill: none; stroke: #666; stroke-width: 2.200; }
.item .dot { fill: #666; stroke: none; }
.home { position: absolute; left: 248px; bottom: 16px; width: 273px; height: 10px; border-radius: 5px; background: #000; }
```
